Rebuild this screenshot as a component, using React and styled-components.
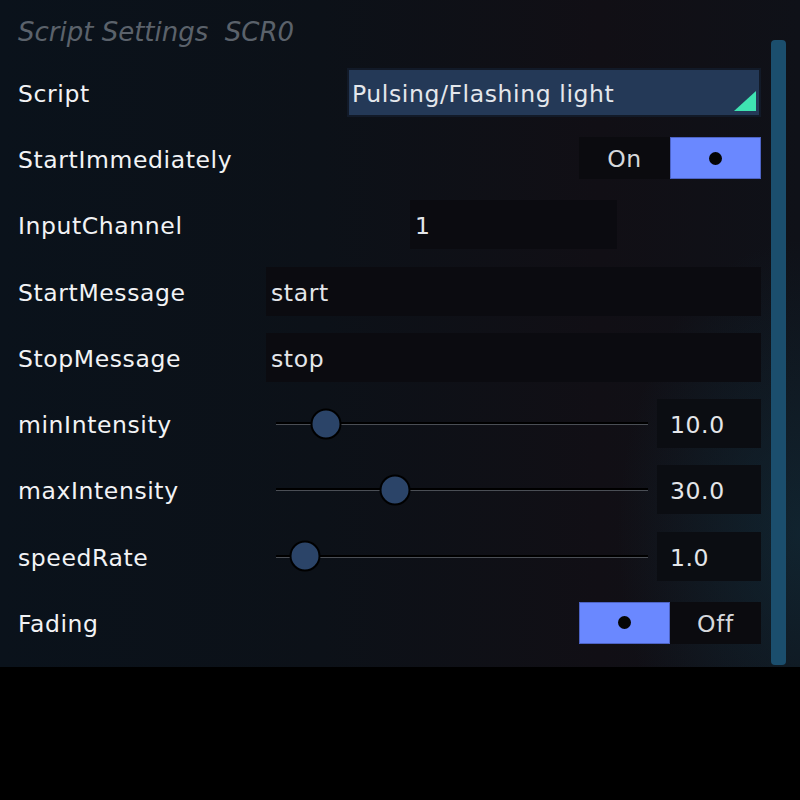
import React from "react";
import styled, { createGlobalStyle } from "styled-components";

const GlobalStyle = createGlobalStyle`
  html, body {
    margin: 0;
    padding: 0;
    background: #000;
  }
  body {
    font-family: "DejaVu Sans", "Noto Sans", sans-serif;
  }
`;

const settings = [
  { type: "select", label: "Script", value: "Pulsing/Flashing light" },
  { type: "toggle", label: "StartImmediately", on: true },
  { type: "number", label: "InputChannel", value: "1" },
  { type: "text", label: "StartMessage", value: "start" },
  { type: "text", label: "StopMessage", value: "stop" },
  { type: "slider", label: "minIntensity", value: "10.0", pos: 50 },
  { type: "slider", label: "maxIntensity", value: "30.0", pos: 119 },
  { type: "slider", label: "speedRate", value: "1.0", pos: 29 },
  { type: "toggle", label: "Fading", on: false },
];

function Control({ item }) {
  switch (item.type) {
    case "select":
      return (
        <Select>
          <SelectText>{item.value}</SelectText>
          <Corner viewBox="0 0 24 22">
            <polygon points="1,21 23,1 23,21" fill="#3fe3b2" />
          </Corner>
        </Select>
      );
    case "toggle":
      return (
        <Toggle>
          {item.on ? (
            <>
              <ToggleLabel>On</ToggleLabel>
              <ToggleKnob><Dot /></ToggleKnob>
            </>
          ) : (
            <>
              <ToggleKnob><Dot /></ToggleKnob>
              <ToggleLabel>Off</ToggleLabel>
            </>
          )}
        </Toggle>
      );
    case "number":
      return (
        <Centered>
          <Field $width="207px">{item.value}</Field>
        </Centered>
      );
    case "text":
      return <Field>{item.value}</Field>;
    case "slider":
      return (
        <SliderRow>
          <Track>
            <Thumb style={{ left: item.pos + "px" }} />
          </Track>
          <ValueBox>{item.value}</ValueBox>
        </SliderRow>
      );
    default:
      return null;
  }
}

export default function App() {
  return (
    <>
      <GlobalStyle />
      <Panel>
        <Content>
          <Title>Script Settings&nbsp; SCR0</Title>
          <Rows>
            {settings.map((item) => (
              <Row key={item.label}>
                <Label>{item.label}</Label>
                <ControlCell>
                  <Control item={item} />
                </ControlCell>
              </Row>
            ))}
          </Rows>
        </Content>
        <Scrollbar />
      </Panel>
    </>
  );
}

const textStyle = `
  font-size: 23.5px;
  letter-spacing: 0.6px;
`;

const Panel = styled.div`
  display: flex;
  width: 800px;
  height: 667px;
  box-sizing: border-box;
  padding: 0 14px 0 18px;
  background:
    radial-gradient(ellipse 260px 420px at 100% 80%, rgba(20, 70, 90, 0.35), transparent 70%),
    linear-gradient(90deg, #0a121b 0%, #0c1118 40%, #110f15 75%, #0f1118 100%);
  overflow: hidden;
`;

const Content = styled.div`
  flex: 0 0 743px;
  display: flex;
  flex-direction: column;
`;

const Title = styled.div`
  height: 59px;
  padding-top: 15px;
  box-sizing: border-box;
  font-family: "DejaVu Sans", sans-serif;
  font-style: italic;
  font-size: 26px;
  color: #5b626b;
  line-height: 34px;
`;

const Rows = styled.div`
  display: grid;
  grid-auto-rows: 66.3px;
`;

const Row = styled.div`
  display: grid;
  grid-template-columns: 248px 1fr;
  align-items: center;
`;

const Label = styled.div`
  ${textStyle}
  color: #f2f3f5;
  padding-top: 3px;
`;

const ControlCell = styled.div`
  display: flex;
  justify-content: flex-end;
  align-items: center;
`;

const Select = styled.div`
  position: relative;
  width: 414px;
  height: 49px;
  box-sizing: border-box;
  border: 2px solid #121a28;
  background: #243957;
  display: flex;
  align-items: center;
  padding-left: 3px;
`;

const SelectText = styled.span`
  ${textStyle}
  color: #e4e7ec;
  padding-top: 3px;
`;

const Corner = styled.svg`
  position: absolute;
  right: 2px;
  bottom: 3px;
  width: 24px;
  height: 22px;
`;

const Toggle = styled.div`
  display: flex;
  width: 182px;
  height: 42px;
  background: #0b0b0f;
`;

const ToggleLabel = styled.div`
  flex: 1;
  display: flex;
  align-items: center;
  justify-content: center;
  padding-top: 2px;
  ${textStyle}
  color: #d6d8dc;
`;

const ToggleKnob = styled.div`
  flex: 0 0 91px;
  display: flex;
  align-items: center;
  justify-content: center;
  box-sizing: border-box;
  background: #6a88ff;
  border: 1px solid #4d63c4;
`;

const Dot = styled.span`
  width: 13px;
  height: 13px;
  border-radius: 50%;
  background: #050505;
`;

const Centered = styled.div`
  flex: 1;
  display: flex;
  justify-content: center;
`;

const Field = styled.div`
  width: ${(p) => p.$width || "100%"};
  height: 49px;
  box-sizing: border-box;
  padding: 3px 0 0 5px;
  display: flex;
  align-items: center;
  background: #0b0b10;
  ${textStyle}
  color: #e4e6ea;
`;

const SliderRow = styled.div`
  flex: 1;
  display: flex;
  align-items: center;
  padding-left: 10px;
`;

const Track = styled.div`
  position: relative;
  width: 372px;
  height: 3px;
  background: linear-gradient(#000 0 2px, #4a4e55 2px 3px);
  margin-right: 9px;
`;

const Thumb = styled.span`
  position: absolute;
  top: 50%;
  width: 31px;
  height: 31px;
  box-sizing: border-box;
  border-radius: 50%;
  border: 2px solid #000;
  background: #2b4468;
  transform: translate(-50%, -50%);
`;

const ValueBox = styled.div`
  width: 104px;
  height: 49px;
  box-sizing: border-box;
  padding: 3px 0 0 13px;
  display: flex;
  align-items: center;
  background: #0b0d12;
  ${textStyle}
  color: #e4e6ea;
`;

const Scrollbar = styled.div`
  margin: 40px 0 2px 10px;
  width: 16px;
  border-radius: 4px;
  background: #1b4e6d;
`;
